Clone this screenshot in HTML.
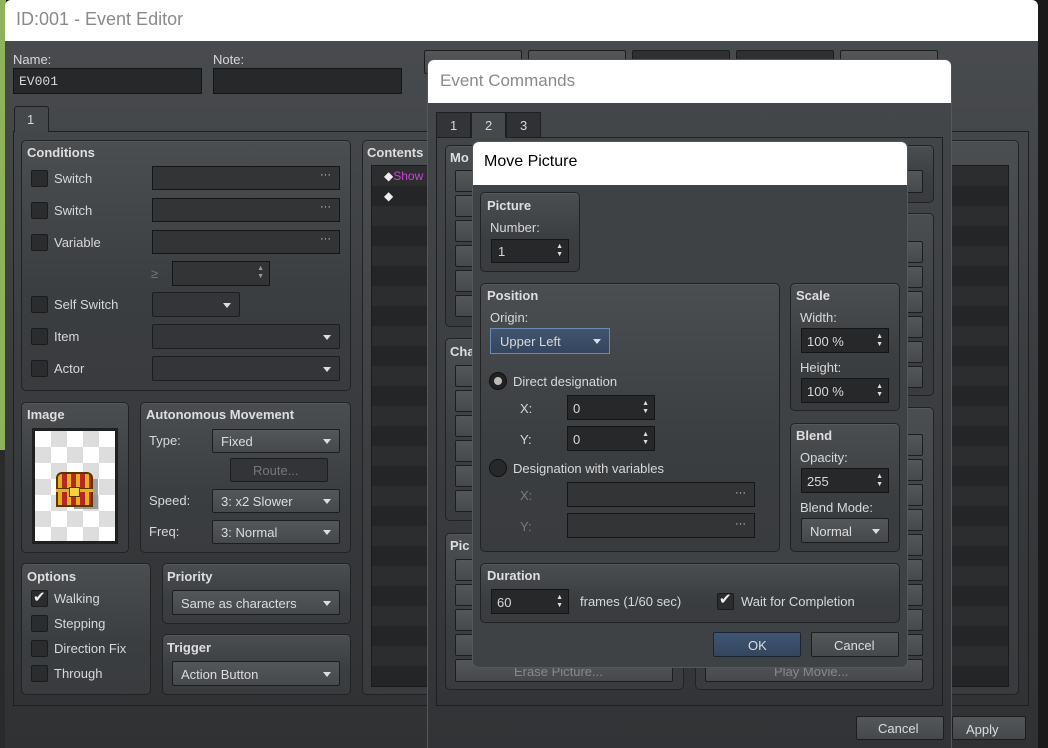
<!DOCTYPE html>
<html><head><meta charset="utf-8"><style>
*{box-sizing:border-box;margin:0;padding:0}
html{overflow:hidden;width:1048px;height:748px}
body{width:1048px;height:748px;overflow:hidden;position:relative;background:#1a1a1a;font-family:"Liberation Sans","DejaVu Sans",sans-serif;font-size:13px;color:#d8d8d8}
div,span{position:absolute}
.t{white-space:nowrap}
.b{font-weight:bold;color:#dedede}
.grp{border:1px solid #202224;border-radius:5px;background:linear-gradient(#4b4e51,#3b3e41 60%,#393b3e);box-shadow:inset 0 1px 0 #55585b}
.in{background:#26282a;border:1px solid #141516}
.btn{background:linear-gradient(#54575a,#46494c);border:1px solid #1c1d1f;border-radius:2px;text-align:center;color:#dcdcdc}
.cb{width:17px;height:17px;background:#2a2c2e;border:1px solid #1a1b1c;border-radius:2px}
.dots{right:8px;top:2px;color:#ccc;font-size:11px}
.arr{right:8px;top:50%;margin-top:-2px;width:0;height:0;border-left:4px solid transparent;border-right:4px solid transparent;border-top:5px solid #ddd}
.sp{right:5px;font-size:7px;color:#ddd;line-height:8px}
.x{width:18px;height:18px}
</style></head><body>
<div style="left:0;top:0;width:6px;height:450px;background:#8fb35a"></div>
<div style="left:0;top:450px;width:6px;height:298px;background:#2a2a2a"></div>
<div style="left:5px;top:0;width:1033px;height:748px;background:linear-gradient(#4a4d50,#3a3c3f 50%,#2f3133);border-radius:6px 6px 0 0;overflow:hidden">
 <div style="left:0;top:0;width:1033px;height:41px;background:#fff"></div>
 <div class="t" style="left:11px;top:9px;font-size:18px;color:#8a8a8a">ID:001 - Event Editor</div>
 <svg class="x" style="left:998px;top:10px" viewBox="0 0 18 18"><path d="M1 1L17 17M17 1L1 17" stroke="#888" stroke-width="1.4"/></svg>
</div>
<div class="t" style="left:13px;top:52px">Name:</div>
<div class="in" style="left:13px;top:68px;width:189px;height:26px"><span class="t" style="left:5px;top:5px;font-family:'Liberation Mono',monospace;font-size:13px">EV001</span></div>
<div class="t" style="left:213px;top:52px">Note:</div>
<div class="in" style="left:213px;top:68px;width:189px;height:26px"></div>
<div class="btn" style="left:424px;top:50px;width:98px;height:24px"></div>
<div class="btn" style="left:528px;top:50px;width:98px;height:24px"></div>
<div class="btn" style="left:632px;top:50px;width:98px;height:24px;background:#2e3033"></div>
<div class="btn" style="left:736px;top:50px;width:98px;height:24px;background:#2e3033"></div>
<div class="btn" style="left:840px;top:50px;width:98px;height:24px"></div>
<div style="left:13px;top:131px;width:1016px;height:575px;border:1px solid #1e1f21"></div>
<div style="left:14px;top:106px;width:35px;height:26px;border:1px solid #1e1f21;border-bottom:none;background:#45484b;border-radius:3px 3px 0 0"><span class="t" style="left:12px;top:5px">1</span></div>
<div class="grp" style="left:21px;top:140px;width:330px;height:251px"></div>
<div class="t b" style="left:27px;top:145px">Conditions</div>
<div class="cb" style="left:31px;top:170px"></div><div class="t" style="left:54px;top:171px">Switch</div>
<div class="in" style="left:152px;top:166px;width:188px;height:24px;background:#323436"><span class="t dots">···</span></div>
<div class="cb" style="left:31px;top:202px"></div><div class="t" style="left:54px;top:203px">Switch</div>
<div class="in" style="left:152px;top:198px;width:188px;height:24px;background:#323436"><span class="t dots">···</span></div>
<div class="cb" style="left:31px;top:234px"></div><div class="t" style="left:54px;top:235px">Variable</div>
<div class="in" style="left:152px;top:230px;width:188px;height:24px;background:#323436"><span class="t dots">···</span></div>
<div class="t" style="left:151px;top:266px;color:#777">≥</div>
<div class="in" style="left:172px;top:261px;width:98px;height:25px;background:#323436"><span class="sp" style="top:3px;color:#999">▲<br>▼</span></div>
<div class="cb" style="left:31px;top:296px"></div><div class="t" style="left:54px;top:297px">Self Switch</div>
<div class="btn" style="left:152px;top:292px;width:88px;height:25px;background:#333538"><span class="arr"></span></div>
<div class="cb" style="left:31px;top:328px"></div><div class="t" style="left:54px;top:329px">Item</div>
<div class="btn" style="left:152px;top:324px;width:188px;height:25px;background:#333538"><span class="arr"></span></div>
<div class="cb" style="left:31px;top:360px"></div><div class="t" style="left:54px;top:361px">Actor</div>
<div class="btn" style="left:152px;top:356px;width:188px;height:25px;background:#333538"><span class="arr"></span></div>
<div class="grp" style="left:21px;top:402px;width:108px;height:151px"></div>
<div class="t b" style="left:27px;top:407px">Image</div>
<div style="left:32px;top:428px;width:86px;height:116px;border:3px solid #1f2022;background-color:#fff;background-image:linear-gradient(45deg,#ddd 25%,transparent 25%,transparent 75%,#ddd 75%),linear-gradient(45deg,#ddd 25%,transparent 25%,transparent 75%,#ddd 75%);background-size:32px 32px;background-position:0 0,16px 16px"></div>
<div style="left:74px;top:479px;width:24px;height:30px;background:#8a8a8a;opacity:.8"></div>
<div style="left:56px;top:472px;width:37px;height:18px;background:repeating-linear-gradient(90deg,#e8b020 0 4px,#b52828 4px 9px);border:2px solid #5a3500;border-radius:6px 6px 0 0"></div>
<div style="left:56px;top:489px;width:37px;height:18px;background:repeating-linear-gradient(90deg,#e8b020 0 4px,#b52828 4px 9px);border:2px solid #5a3500"></div>
<div style="left:56px;top:489px;width:37px;height:3px;background:#e8b020"></div>
<div style="left:69px;top:487px;width:11px;height:10px;background:#f5d040;border:1px solid #5a3500"></div>
<div class="grp" style="left:140px;top:402px;width:211px;height:151px"></div>
<div class="t b" style="left:146px;top:407px">Autonomous Movement</div>
<div class="t" style="left:149px;top:433px">Type:</div>
<div class="btn" style="left:212px;top:429px;width:128px;height:24px"><span class="t" style="left:8px;top:4px">Fixed</span><span class="arr"></span></div>
<div class="btn" style="left:230px;top:458px;width:98px;height:24px;background:#323437;color:#777"><span class="t" style="left:22px;top:4px">Route...</span></div>
<div class="t" style="left:149px;top:493px">Speed:</div>
<div class="btn" style="left:212px;top:489px;width:128px;height:24px"><span class="t" style="left:8px;top:4px">3: x2 Slower</span><span class="arr"></span></div>
<div class="t" style="left:149px;top:524px">Freq:</div>
<div class="btn" style="left:212px;top:520px;width:128px;height:24px"><span class="t" style="left:8px;top:4px">3: Normal</span><span class="arr"></span></div>
<div class="grp" style="left:21px;top:563px;width:130px;height:132px"></div>
<div class="t b" style="left:27px;top:569px">Options</div>
<div class="cb" style="left:31px;top:590px"></div><div class="t" style="left:33px;top:588px;font-size:15px;color:#eee">✔</div><div class="t" style="left:54px;top:591px">Walking</div>
<div class="cb" style="left:31px;top:615px"></div><div class="t" style="left:54px;top:616px">Stepping</div>
<div class="cb" style="left:31px;top:640px"></div><div class="t" style="left:54px;top:641px">Direction Fix</div>
<div class="cb" style="left:31px;top:665px"></div><div class="t" style="left:54px;top:666px">Through</div>
<div class="grp" style="left:162px;top:563px;width:189px;height:61px"></div>
<div class="t b" style="left:167px;top:569px">Priority</div>
<div class="btn" style="left:172px;top:590px;width:168px;height:25px"><span class="t" style="left:8px;top:5px">Same as characters</span><span class="arr"></span></div>
<div class="grp" style="left:162px;top:634px;width:189px;height:61px"></div>
<div class="t b" style="left:167px;top:640px">Trigger</div>
<div class="btn" style="left:172px;top:661px;width:168px;height:25px"><span class="t" style="left:8px;top:5px">Action Button</span><span class="arr"></span></div>
<div class="grp" style="left:362px;top:140px;width:657px;height:555px"></div>
<div class="t b" style="left:367px;top:145px">Contents</div>
<div style="left:371px;top:165px;width:638px;height:522px;border:1px solid #1a1b1c;background:repeating-linear-gradient(#2b2d2f 0 20px,#232527 20px 40px)"></div>
<div class="t" style="left:384px;top:169px;color:#eee;font-size:12px">◆<span style="position:static;color:#d040e0">Show</span></div>
<div class="t" style="left:384px;top:189px;color:#eee;font-size:12px">◆</div>
<div class="btn" style="left:952px;top:716px;width:74px;height:24px"><span class="t" style="left:13px;top:5px">Apply</span></div>

<div style="left:427px;top:59px;width:525px;height:689px;background:linear-gradient(#45484b,#393b3e 60%,#313336);border:1px solid #55585b;border-bottom:none;border-radius:7px 7px 0 0;overflow:hidden">
 <div style="left:0;top:0;width:525px;height:43px;background:#fff"></div>
</div>
<div class="t" style="left:440px;top:71px;font-size:17px;color:#8a8a8a">Event Commands</div>
<svg class="x" style="left:918px;top:71px" viewBox="0 0 18 18"><path d="M1 1L17 17M17 1L1 17" stroke="#888" stroke-width="1.4"/></svg>
<div style="left:436px;top:137px;width:507px;height:569px;border:1px solid #1e1f21"></div>
<div style="left:436px;top:112px;width:35px;height:26px;border:1px solid #1e1f21;background:#323437"><span class="t" style="left:13px;top:5px">1</span></div>
<div style="left:471px;top:112px;width:35px;height:26px;border:1px solid #1e1f21;border-bottom:none;background:#46494c"><span class="t" style="left:13px;top:5px">2</span></div>
<div style="left:506px;top:112px;width:35px;height:26px;border:1px solid #1e1f21;background:#2f3134"><span class="t" style="left:13px;top:5px">3</span></div>
<div class="btn" style="left:856px;top:716px;width:88px;height:24px"><span class="t" style="left:21px;top:4px">Cancel</span></div>
<div class="grp" style="left:445px;top:145px;width:239px;height:182px"></div>
<div class="t b" style="left:450px;top:150px">Mo</div>
<div class="grp" style="left:445px;top:338px;width:239px;height:183px"></div>
<div class="t b" style="left:450px;top:344px">Cha</div>
<div class="grp" style="left:445px;top:533px;width:239px;height:157px"></div>
<div class="t b" style="left:450px;top:538px">Pic</div>
<div class="btn" style="left:455px;top:170px;width:218px;height:22px"></div>
<div class="btn" style="left:455px;top:195px;width:218px;height:22px"></div>
<div class="btn" style="left:455px;top:220px;width:218px;height:22px"></div>
<div class="btn" style="left:455px;top:245px;width:218px;height:22px"></div>
<div class="btn" style="left:455px;top:270px;width:218px;height:22px"></div>
<div class="btn" style="left:455px;top:295px;width:218px;height:22px"></div>
<div class="btn" style="left:455px;top:365px;width:218px;height:22px"></div>
<div class="btn" style="left:455px;top:390px;width:218px;height:22px"></div>
<div class="btn" style="left:455px;top:415px;width:218px;height:22px"></div>
<div class="btn" style="left:455px;top:440px;width:218px;height:22px"></div>
<div class="btn" style="left:455px;top:465px;width:218px;height:22px"></div>
<div class="btn" style="left:455px;top:490px;width:218px;height:22px"></div>
<div class="btn" style="left:455px;top:559px;width:218px;height:22px"></div>
<div class="btn" style="left:455px;top:584px;width:218px;height:22px"></div>
<div class="btn" style="left:455px;top:609px;width:218px;height:22px"></div>
<div class="btn" style="left:455px;top:634px;width:218px;height:22px"></div>
<div class="btn" style="left:455px;top:659px;width:218px;height:23px;color:#888"><span class="t" style="left:58px;top:4px">Erase Picture...</span></div>
<div class="grp" style="left:695px;top:145px;width:239px;height:58px"></div>
<div class="grp" style="left:695px;top:213px;width:239px;height:183px"></div>
<div class="grp" style="left:695px;top:407px;width:239px;height:283px"></div>
<div class="btn" style="left:705px;top:170px;width:218px;height:23px"></div>
<div class="btn" style="left:705px;top:241px;width:218px;height:22px"></div>
<div class="btn" style="left:705px;top:266px;width:218px;height:22px"></div>
<div class="btn" style="left:705px;top:291px;width:218px;height:22px"></div>
<div class="btn" style="left:705px;top:316px;width:218px;height:22px"></div>
<div class="btn" style="left:705px;top:341px;width:218px;height:22px"></div>
<div class="btn" style="left:705px;top:366px;width:218px;height:22px"></div>
<div class="btn" style="left:705px;top:434px;width:218px;height:22px"></div>
<div class="btn" style="left:705px;top:459px;width:218px;height:22px"></div>
<div class="btn" style="left:705px;top:484px;width:218px;height:22px"></div>
<div class="btn" style="left:705px;top:509px;width:218px;height:22px"></div>
<div class="btn" style="left:705px;top:534px;width:218px;height:22px"></div>
<div class="btn" style="left:705px;top:559px;width:218px;height:22px"></div>
<div class="btn" style="left:705px;top:584px;width:218px;height:22px"></div>
<div class="btn" style="left:705px;top:609px;width:218px;height:22px"></div>
<div class="btn" style="left:705px;top:634px;width:218px;height:22px"></div>
<div class="btn" style="left:705px;top:659px;width:218px;height:23px;color:#888"><span class="t" style="left:68px;top:4px">Play Movie...</span></div>

<div style="left:472px;top:141px;width:436px;height:527px;background:#3f4245;border:1px solid #55585b;border-radius:7px;overflow:hidden">
 <div style="left:0;top:0;width:436px;height:43px;background:#fff"></div>
</div>
<div class="t" style="left:484px;top:153px;font-size:16px;color:#000">Move Picture</div>
<svg class="x" style="left:874px;top:153px" viewBox="0 0 18 18"><path d="M2 2L16 16M16 2L2 16" stroke="#111" stroke-width="1.5"/></svg>
<div class="grp" style="left:480px;top:192px;width:100px;height:80px"></div>
<div class="t b" style="left:487px;top:198px">Picture</div>
<div class="t" style="left:490px;top:220px">Number:</div>
<div class="in" style="left:491px;top:239px;width:78px;height:24px"><span class="t" style="left:6px;top:4px">1</span><span class="sp" style="top:3px">▲<br>▼</span></div>
<div class="grp" style="left:480px;top:283px;width:300px;height:269px"></div>
<div class="t b" style="left:487px;top:288px">Position</div>
<div class="t" style="left:490px;top:310px">Origin:</div>
<div style="left:490px;top:328px;width:120px;height:26px;background:linear-gradient(#42556e,#34465e);border:1px solid #6a8ab5"><span class="t" style="left:9px;top:5px">Upper Left</span><span class="arr"></span></div>
<div style="left:489px;top:372px;width:18px;height:18px;border-radius:50%;background:#222;border:1px solid #111"><span style="left:4px;top:4px;width:8px;height:8px;border-radius:50%;background:#bbb"></span></div>
<div class="t" style="left:513px;top:374px">Direct designation</div>
<div class="t" style="left:520px;top:401px">X:</div>
<div class="in" style="left:567px;top:395px;width:88px;height:25px"><span class="t" style="left:5px;top:5px">0</span><span class="sp" style="top:4px">▲<br>▼</span></div>
<div class="t" style="left:520px;top:432px">Y:</div>
<div class="in" style="left:567px;top:426px;width:88px;height:25px"><span class="t" style="left:5px;top:5px">0</span><span class="sp" style="top:4px">▲<br>▼</span></div>
<div style="left:489px;top:459px;width:18px;height:18px;border-radius:50%;background:#26282a;border:1px solid #111"></div>
<div class="t" style="left:513px;top:461px">Designation with variables</div>
<div class="t" style="left:520px;top:488px;color:#7a7a7a">X:</div>
<div class="in" style="left:567px;top:482px;width:188px;height:25px;background:#323436"><span class="t dots" style="top:4px">···</span></div>
<div class="t" style="left:520px;top:519px;color:#7a7a7a">Y:</div>
<div class="in" style="left:567px;top:513px;width:188px;height:25px;background:#323436"><span class="t dots" style="top:4px">···</span></div>
<div class="grp" style="left:790px;top:283px;width:110px;height:128px"></div>
<div class="t b" style="left:796px;top:288px">Scale</div>
<div class="t" style="left:800px;top:310px">Width:</div>
<div class="in" style="left:801px;top:328px;width:88px;height:25px"><span class="t" style="left:5px;top:5px">100 %</span><span class="sp" style="top:4px">▲<br>▼</span></div>
<div class="t" style="left:800px;top:360px">Height:</div>
<div class="in" style="left:801px;top:378px;width:88px;height:25px"><span class="t" style="left:5px;top:5px">100 %</span><span class="sp" style="top:4px">▲<br>▼</span></div>
<div class="grp" style="left:790px;top:423px;width:110px;height:129px"></div>
<div class="t b" style="left:796px;top:428px">Blend</div>
<div class="t" style="left:800px;top:450px">Opacity:</div>
<div class="in" style="left:801px;top:468px;width:88px;height:25px"><span class="t" style="left:5px;top:5px">255</span><span class="sp" style="top:4px">▲<br>▼</span></div>
<div class="t" style="left:800px;top:500px">Blend Mode:</div>
<div class="btn" style="left:801px;top:518px;width:88px;height:25px"><span class="t" style="left:8px;top:5px">Normal</span><span class="arr"></span></div>
<div class="grp" style="left:480px;top:563px;width:420px;height:60px"></div>
<div class="t b" style="left:487px;top:568px">Duration</div>
<div class="in" style="left:491px;top:589px;width:78px;height:25px"><span class="t" style="left:5px;top:5px">60</span><span class="sp" style="top:4px">▲<br>▼</span></div>
<div class="t" style="left:580px;top:594px">frames (1/60 sec)</div>
<div class="cb" style="left:717px;top:593px"></div><div class="t" style="left:719px;top:590px;font-size:15px;color:#eee">✔</div>
<div class="t" style="left:741px;top:594px">Wait for Completion</div>
<div class="btn" style="left:713px;top:632px;width:88px;height:25px;background:linear-gradient(#3f5572,#33465f);border-color:#1b2433"><span class="t" style="left:34px;top:5px">OK</span></div>
<div class="btn" style="left:811px;top:632px;width:88px;height:25px"><span class="t" style="left:22px;top:5px">Cancel</span></div>
</body></html>
